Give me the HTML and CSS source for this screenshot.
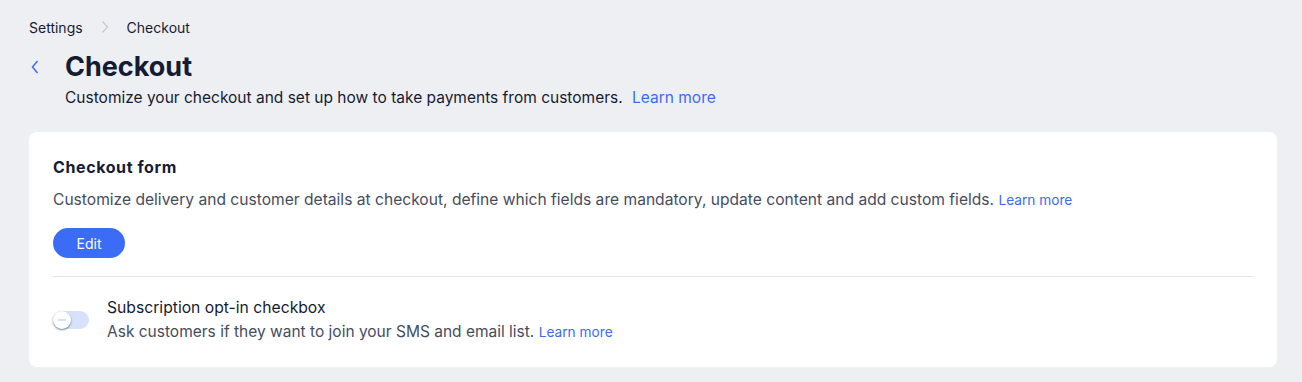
FILE: index.html
```html
<!DOCTYPE html>
<html lang="en">
<head>
  <meta charset="UTF-8">
  <title>Checkout</title>
  <link rel="stylesheet" href="styles.css">
</head>
<body>
  <div class="page">
    <nav class="breadcrumbs">
      <span class="crumb">Settings</span>
      <svg class="crumb-sep" width="8" height="14" viewBox="0 0 8 14"><path d="M1.5 1.5 L6.5 7 L1.5 12.5" fill="none" stroke="#c5c9d3" stroke-width="1.2"/></svg>
      <span class="crumb current">Checkout</span>
    </nav>

    <header class="page-header">
      <button class="back-btn" aria-label="Back">
        <svg width="10" height="16" viewBox="0 0 10 16"><path d="M7.5 2 L2.5 8 L7.5 14" fill="none" stroke="#3b6cf5" stroke-width="1.5"/></svg>
      </button>
      <div>
        <h1>Checkout</h1>
        <p class="subtitle">Customize your checkout and set up how to take payments from customers. <a href="#" class="link">Learn more</a></p>
      </div>
    </header>

    <section class="card">
      <h2>Checkout form</h2>
      <p class="desc">Customize delivery and customer details at checkout, define which fields are mandatory, update content and add custom fields. <a href="#" class="link small">Learn more</a></p>
      <button class="btn-primary">Edit</button>

      <div class="divider"></div>

      <div class="toggle-row">
        <div class="toggle"><span class="knob"></span></div>
        <div>
          <div class="row-title">Subscription opt-in checkbox</div>
          <div class="row-desc">Ask customers if they want to join your SMS and email list. <a href="#" class="link small">Learn more</a></div>
        </div>
      </div>
    </section>
  </div>
</body>
</html>
```

FILE: styles.css
```css
body {
  margin: 0;
  background: #eeeff3;
  font-family: Inter, "Noto Sans", sans-serif;
  color: #151b33;
}
.page {
  padding: 17px 24px 0 29px;
}
.breadcrumbs {
  display: flex;
  align-items: center;
  gap: 18px;
  font-size: 14px;
  height: 20px;
}
.crumb-sep {
  margin: 0;
}
.page-header {
  display: flex;
  align-items: flex-start;
  margin-top: 12px;
}
.back-btn {
  background: none;
  border: none;
  padding: 0 0 0 1px;
  width: 36px;
  margin-top: 10px;
  text-align: left;
  cursor: pointer;
}
h1 {
  margin: 0;
  font-size: 27px;
  line-height: 36px;
  font-weight: 700;
}
.subtitle {
  margin: 1px 0 0;
  font-size: 15.5px;
  line-height: 24px;
}
.link {
  color: #3b6cf5;
  text-decoration: none;
  margin-left: 5px;
}
.link.small {
  font-size: 13.7px;
  margin-left: 0;
}
.card {
  margin-top: 22px;
  background: #fff;
  border-radius: 8px;
  padding: 23px 24px 24px;
  width: 1200px;
}
h2 {
  margin: 0;
  font-size: 16px;
  line-height: 24px;
  font-weight: 700;
  letter-spacing: 0.6px;
}
.desc {
  margin: 9px 0 0;
  font-size: 15.6px;
  line-height: 24px;
  color: #464c60;
}
.btn-primary {
  margin-top: 16px;
  background: #3b6cf5;
  color: #fff;
  border: none;
  border-radius: 15px;
  height: 30px;
  width: 72px;
  font: inherit;
  font-size: 14px;
  cursor: pointer;
}
.divider {
  height: 1px;
  background: #dfe3ea;
  margin-top: 18px;
}
.toggle-row {
  display: flex;
  align-items: center;
  gap: 18px;
  margin-top: 20px;
}
.toggle {
  position: relative;
  width: 36px;
  height: 18px;
  border-radius: 9px;
  background: #d6e2fc;
  flex: none;
}
.knob {
  position: absolute;
  left: 0;
  top: 0;
  width: 18px;
  height: 18px;
  border-radius: 50%;
  background: #fff;
  box-shadow: 0 1px 2px rgba(22, 45, 61, 0.6);
}
.knob::after {
  content: "";
  position: absolute;
  left: 5px;
  top: 8px;
  width: 8px;
  height: 2px;
  background: #d6e2fc;
}
.row-title {
  font-size: 15.7px;
  line-height: 22px;
}
.row-desc {
  margin-top: 2px;
  font-size: 15.5px;
  line-height: 22px;
  color: #464c60;
}
```
